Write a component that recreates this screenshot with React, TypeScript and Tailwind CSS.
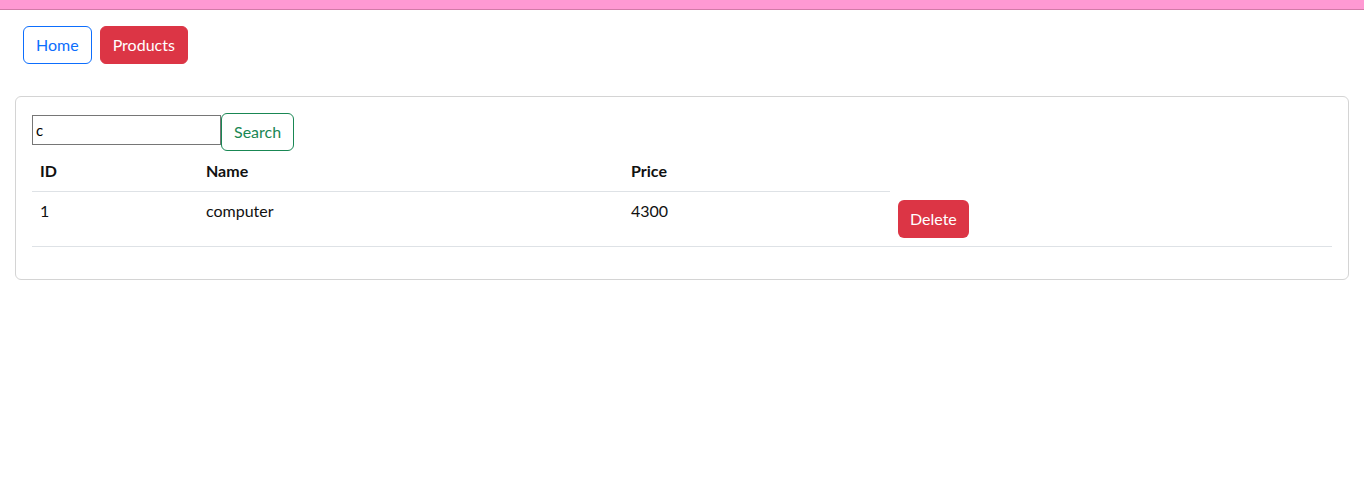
export default function App() {
  return (
    <div className="min-h-[496px] bg-white text-[16px] text-[#111]" style={{ fontFamily: "Lato, 'Noto Sans', sans-serif" }}>
      <div className="h-[10px] border-b border-[#d27aa8] bg-[#ff99d3]" />

      <nav className="flex gap-2 px-[23px] pt-4">
        <button className="h-[38px] rounded-md border border-[#0d6efd] px-3 text-[#0d6efd]">Home</button>
        <button className="h-[38px] rounded-md border border-[#dc3545] bg-[#dc3545] px-3 text-white">Products</button>
      </nav>

      <div className="mx-[15px] mt-[32px] rounded-md border border-[#d4d4d4] p-4">
        <div className="flex items-start">
          <input
            defaultValue="c"
            className="mt-[2px] h-[30px] w-[189px] border border-[#767676] px-[3px] text-[15px] text-black outline-none"
          />
          <button className="h-[38px] rounded-md border border-[#198754] px-3 text-[#198754]">Search</button>
        </div>

        <table className="mb-4 mt-[4px] w-full border-collapse text-left">
          <thead>
            <tr>
              <th className="h-[36px] w-[166px] border-b border-[#dee2e6] px-2 pb-[3px] font-bold">ID</th>
              <th className="w-[425px] border-b border-[#dee2e6] px-2 pb-[3px] font-bold">Name</th>
              <th className="w-[267px] border-b border-[#dee2e6] px-2 pb-[3px] font-bold">Price</th>
            </tr>
          </thead>
          <tbody>
            <tr className="border-b border-[#dee2e6]">
              <td className="px-2 pt-[7px] align-top">1</td>
              <td className="px-2 pt-[7px] align-top">computer</td>
              <td className="px-2 pt-[7px] align-top">4300</td>
              <td className="px-2 pb-2 pt-[9px] align-top">
                <button className="block h-[38px] rounded-md bg-[#dc3545] px-3 text-white">Delete</button>
              </td>
            </tr>
          </tbody>
        </table>
      </div>
    </div>
  );
}
